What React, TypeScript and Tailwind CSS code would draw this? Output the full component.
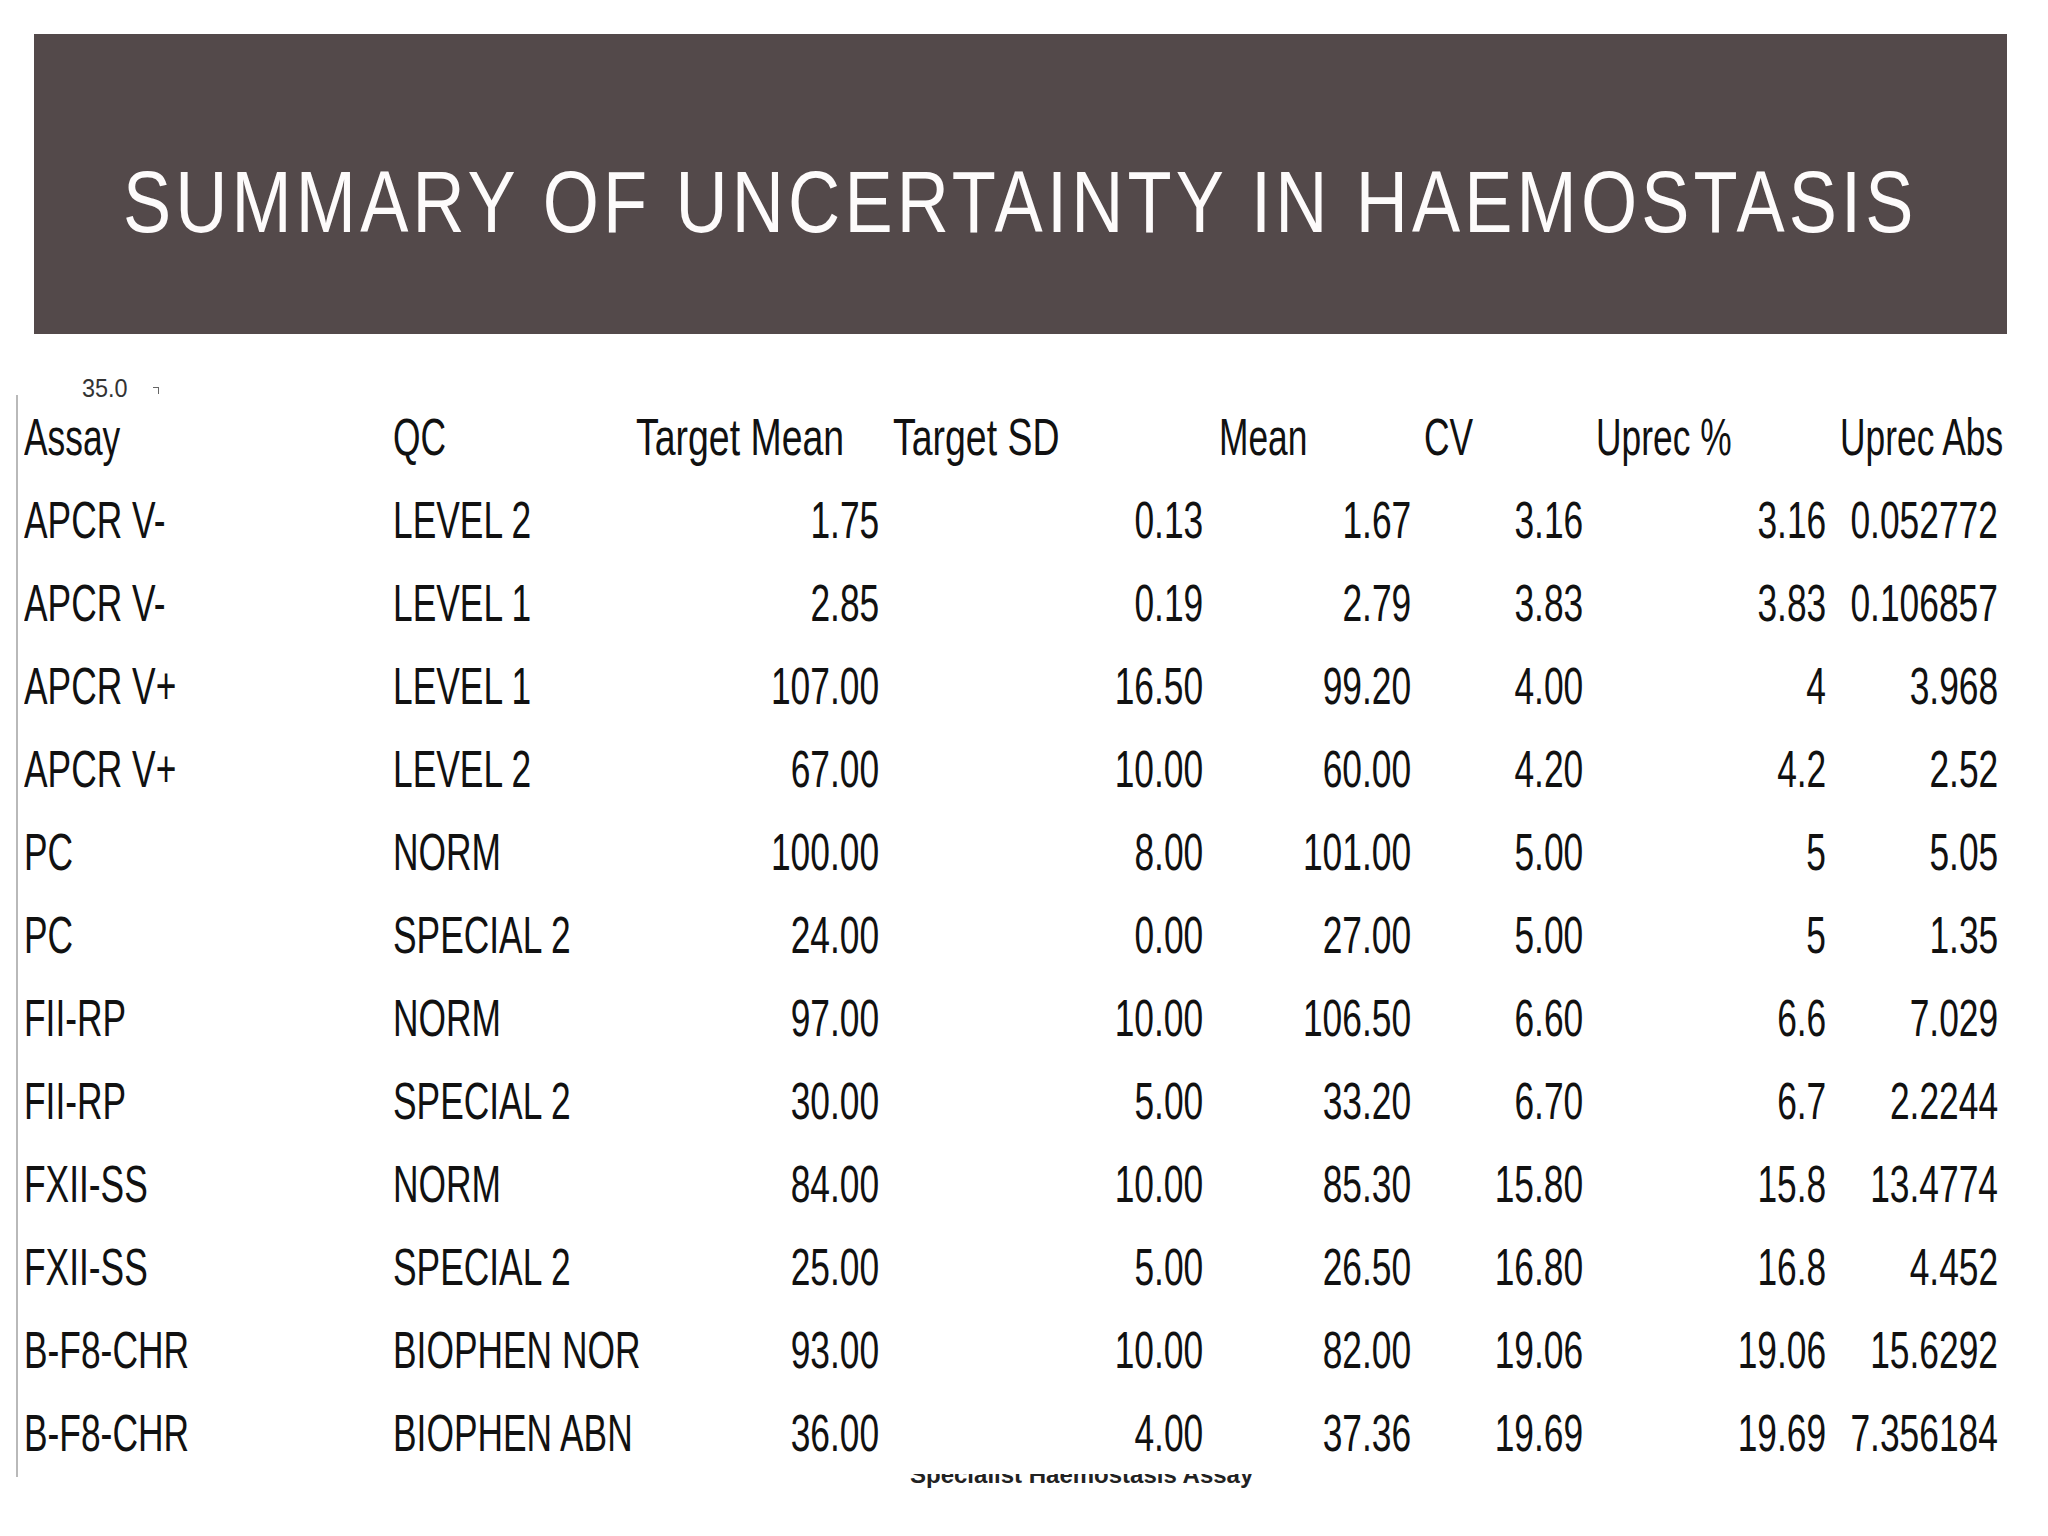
import React from 'react';

type Row = [string, string, string, string, string, string, string, string];

const rows: Row[] = [
  ['APCR V-', 'LEVEL 2', '1.75', '0.13', '1.67', '3.16', '3.16', '0.052772'],
  ['APCR V-', 'LEVEL 1', '2.85', '0.19', '2.79', '3.83', '3.83', '0.106857'],
  ['APCR V+', 'LEVEL 1', '107.00', '16.50', '99.20', '4.00', '4', '3.968'],
  ['APCR V+', 'LEVEL 2', '67.00', '10.00', '60.00', '4.20', '4.2', '2.52'],
  ['PC', 'NORM', '100.00', '8.00', '101.00', '5.00', '5', '5.05'],
  ['PC', 'SPECIAL 2', '24.00', '0.00', '27.00', '5.00', '5', '1.35'],
  ['FII-RP', 'NORM', '97.00', '10.00', '106.50', '6.60', '6.6', '7.029'],
  ['FII-RP', 'SPECIAL 2', '30.00', '5.00', '33.20', '6.70', '6.7', '2.2244'],
  ['FXII-SS', 'NORM', '84.00', '10.00', '85.30', '15.80', '15.8', '13.4774'],
  ['FXII-SS', 'SPECIAL 2', '25.00', '5.00', '26.50', '16.80', '16.8', '4.452'],
  ['B-F8-CHR', 'BIOPHEN NOR', '93.00', '10.00', '82.00', '19.06', '19.06', '15.6292'],
  ['B-F8-CHR', 'BIOPHEN ABN', '36.00', '4.00', '37.36', '19.69', '19.69', '7.356184'],
];

const headers = ['Assay', 'QC', 'Target Mean', 'Target SD', 'Mean', 'CV', 'Uprec %', 'Uprec Abs'];

// header cells are left-aligned, each with its own inset
const headCls = [
  'justify-start pl-[6px]',
  'justify-start',
  'justify-start',
  'justify-start pl-[7px]',
  'justify-start pl-[9px]',
  'justify-start pl-[6px]',
  'justify-start pl-[6px]',
  'justify-start pl-[7px]',
];

// numbers sit on the right edge of their column
const cellCls = [
  'justify-start pl-[6px]',
  'justify-start',
  'justify-end pr-[7px]',
  'justify-end pr-[7px]',
  'justify-end pr-[7px]',
  'justify-end pr-[7px]',
  'justify-end pr-[7px]',
  'justify-end pr-[50px]',
];

// the sheet uses a tall condensed face; squeeze Liberation Sans sideways
const Cell: React.FC<{ text: string; cls: string; right?: boolean; wide?: boolean }> = ({
  text,
  cls,
  right,
  wide,
}) => (
  <div className={`flex h-[83px] items-center ${cls}`}>
    <span
      className={`inline-block whitespace-pre text-[52px] leading-none text-[#111] ${
        wide ? 'scale-x-[0.72]' : 'scale-x-[0.68]'
      } ${right ? 'origin-right' : 'origin-left'}`}
    >
      {text}
    </span>
  </div>
);

const App: React.FC = () => {
  return (
    <div className="min-h-[1536px] w-full overflow-hidden bg-white pt-[34px] font-['Liberation_Sans',Arial,sans-serif]">
      <div className="ml-[34px] mr-[41px] flex h-[300px] items-center justify-center bg-[#53494a] pt-[36px]">
        <h1 className="inline-block shrink-0 origin-center scale-x-[0.82] whitespace-nowrap text-[88px] leading-none tracking-[5.1px] text-[#fdfbfb]">
          SUMMARY OF UNCERTAINTY IN HAEMOSTASIS
        </h1>
      </div>

      <div className="flex h-[61px] items-end pl-[82px]">
        <div className="-mb-[6px] flex items-start gap-[20px] text-[26px] leading-[26px] text-[#333]">
          <span className="inline-block origin-left scale-x-[0.9]">35.0</span>
          <span className="mt-[12px] h-[7px] w-[6px] border-r border-t border-[#666]"></span>
        </div>
      </div>

      <div className="ml-[16px] border-l-2 border-[#b9b9b9]">
        <div className="grid grid-cols-[375px_243px_250px_324px_208px_172px_243px_215px]">
          {headers.map((h, i) => (
            <Cell key={h} text={h} cls={headCls[i]} wide={i === 2 || i === 3} />
          ))}
          {rows.map((r, ri) =>
            r.map((v, ci) => (
              <Cell key={`${ri}-${ci}`} text={v} cls={cellCls[ci]} right={ci > 1} />
            ))
          )}
        </div>
        <div className="h-[3px]"></div>
      </div>

      {/* caption of the pasted chart, cut off by the crop above it */}
      <div className="-mt-[3px] ml-[910px] h-[15px] overflow-hidden">
        <div className="-mt-[11px] text-[24px] font-bold leading-[24px] text-[#222]">
          Specialist Haemostasis Assay
        </div>
      </div>
    </div>
  );
};

export default App;
